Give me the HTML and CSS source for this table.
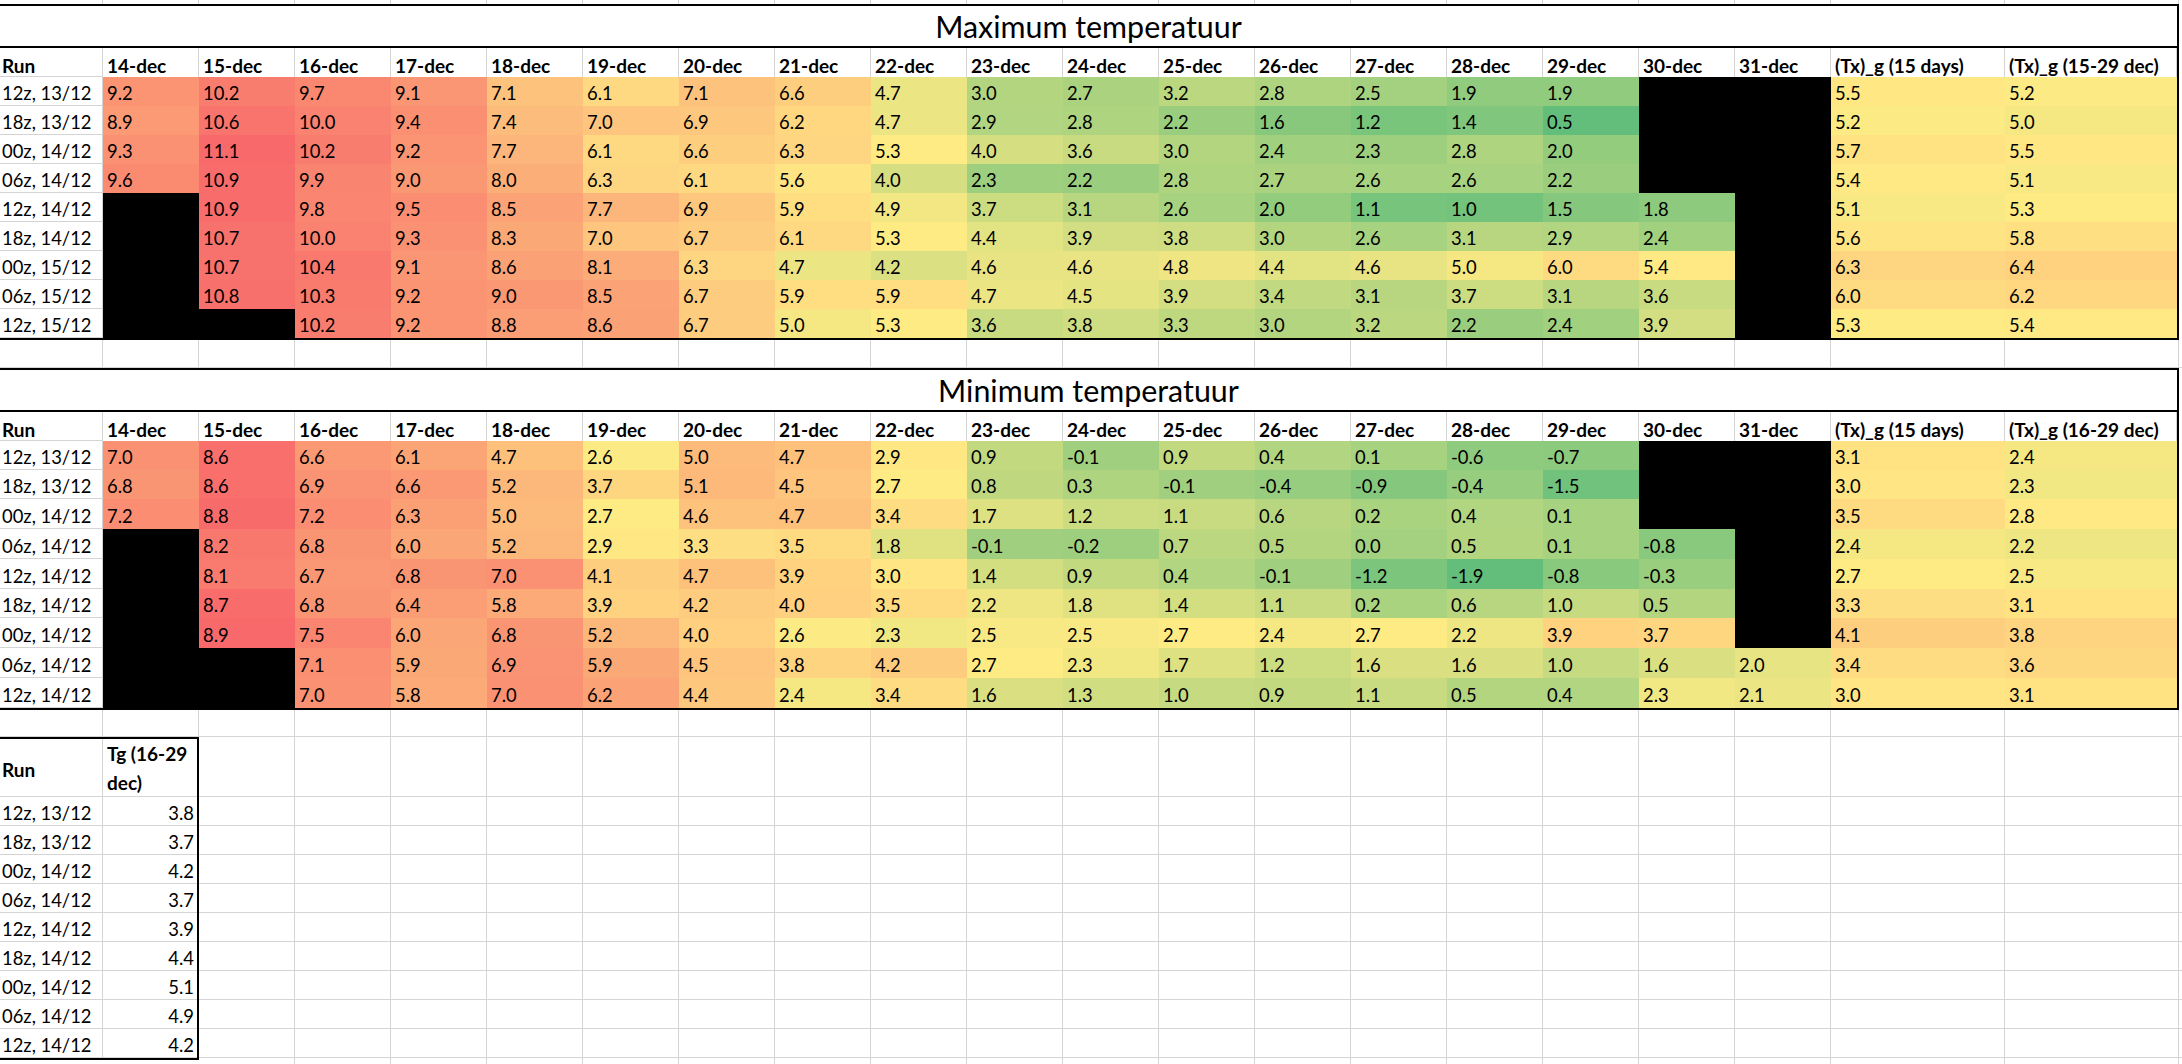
FILE: index.html
```html
<!DOCTYPE html>
<html lang="nl">
<head>
<meta charset="utf-8">
<title>Temperatuur</title>
<link rel="stylesheet" href="styles.css">
</head>
<body>
<div class="sheet">
  <div class="free strip"></div>

  <div class="block b1">
    <div class="title">Maximum temperatuur</div>
    <div class="h r">Run</div><div class="h">14-dec</div><div class="h">15-dec</div><div class="h">16-dec</div><div class="h">17-dec</div><div class="h">18-dec</div><div class="h">19-dec</div><div class="h">20-dec</div><div class="h">21-dec</div><div class="h">22-dec</div><div class="h">23-dec</div><div class="h">24-dec</div><div class="h">25-dec</div><div class="h">26-dec</div><div class="h">27-dec</div><div class="h">28-dec</div><div class="h">29-dec</div><div class="h">30-dec</div><div class="h">31-dec</div><div class="h">(Tx)_g (15 days)</div><div class="h">(Tx)_g (15-29 dec)</div>

    <div class="r">12z, 13/12</div><div class="v">9.2</div><div class="v">10.2</div><div class="v">9.7</div><div class="v">9.1</div><div class="v">7.1</div><div class="v">6.1</div><div class="v">7.1</div><div class="v">6.6</div><div class="v">4.7</div><div class="v">3.0</div><div class="v">2.7</div><div class="v">3.2</div><div class="v">2.8</div><div class="v">2.5</div><div class="v">1.9</div><div class="v">1.9</div><div class="k"></div><div class="k"></div><div class="v">5.5</div><div class="v">5.2</div>
    <div class="r">18z, 13/12</div><div class="v">8.9</div><div class="v">10.6</div><div class="v">10.0</div><div class="v">9.4</div><div class="v">7.4</div><div class="v">7.0</div><div class="v">6.9</div><div class="v">6.2</div><div class="v">4.7</div><div class="v">2.9</div><div class="v">2.8</div><div class="v">2.2</div><div class="v">1.6</div><div class="v">1.2</div><div class="v">1.4</div><div class="v">0.5</div><div class="k"></div><div class="k"></div><div class="v">5.2</div><div class="v">5.0</div>
    <div class="r">00z, 14/12</div><div class="v">9.3</div><div class="v">11.1</div><div class="v">10.2</div><div class="v">9.2</div><div class="v">7.7</div><div class="v">6.1</div><div class="v">6.6</div><div class="v">6.3</div><div class="v">5.3</div><div class="v">4.0</div><div class="v">3.6</div><div class="v">3.0</div><div class="v">2.4</div><div class="v">2.3</div><div class="v">2.8</div><div class="v">2.0</div><div class="k"></div><div class="k"></div><div class="v">5.7</div><div class="v">5.5</div>
    <div class="r">06z, 14/12</div><div class="v">9.6</div><div class="v">10.9</div><div class="v">9.9</div><div class="v">9.0</div><div class="v">8.0</div><div class="v">6.3</div><div class="v">6.1</div><div class="v">5.6</div><div class="v">4.0</div><div class="v">2.3</div><div class="v">2.2</div><div class="v">2.8</div><div class="v">2.7</div><div class="v">2.6</div><div class="v">2.6</div><div class="v">2.2</div><div class="k"></div><div class="k"></div><div class="v">5.4</div><div class="v">5.1</div>
    <div class="r">12z, 14/12</div><div class="k"></div><div class="v">10.9</div><div class="v">9.8</div><div class="v">9.5</div><div class="v">8.5</div><div class="v">7.7</div><div class="v">6.9</div><div class="v">5.9</div><div class="v">4.9</div><div class="v">3.7</div><div class="v">3.1</div><div class="v">2.6</div><div class="v">2.0</div><div class="v">1.1</div><div class="v">1.0</div><div class="v">1.5</div><div class="v">1.8</div><div class="k"></div><div class="v">5.1</div><div class="v">5.3</div>
    <div class="r">18z, 14/12</div><div class="k"></div><div class="v">10.7</div><div class="v">10.0</div><div class="v">9.3</div><div class="v">8.3</div><div class="v">7.0</div><div class="v">6.7</div><div class="v">6.1</div><div class="v">5.3</div><div class="v">4.4</div><div class="v">3.9</div><div class="v">3.8</div><div class="v">3.0</div><div class="v">2.6</div><div class="v">3.1</div><div class="v">2.9</div><div class="v">2.4</div><div class="k"></div><div class="v">5.6</div><div class="v">5.8</div>
    <div class="r">00z, 15/12</div><div class="k"></div><div class="v">10.7</div><div class="v">10.4</div><div class="v">9.1</div><div class="v">8.6</div><div class="v">8.1</div><div class="v">6.3</div><div class="v">4.7</div><div class="v">4.2</div><div class="v">4.6</div><div class="v">4.6</div><div class="v">4.8</div><div class="v">4.4</div><div class="v">4.6</div><div class="v">5.0</div><div class="v">6.0</div><div class="v">5.4</div><div class="k"></div><div class="v">6.3</div><div class="v">6.4</div>
    <div class="r">06z, 15/12</div><div class="k"></div><div class="v">10.8</div><div class="v">10.3</div><div class="v">9.2</div><div class="v">9.0</div><div class="v">8.5</div><div class="v">6.7</div><div class="v">5.9</div><div class="v">5.9</div><div class="v">4.7</div><div class="v">4.5</div><div class="v">3.9</div><div class="v">3.4</div><div class="v">3.1</div><div class="v">3.7</div><div class="v">3.1</div><div class="v">3.6</div><div class="k"></div><div class="v">6.0</div><div class="v">6.2</div>
    <div class="r">12z, 15/12</div><div class="k"></div><div class="k"></div><div class="v">10.2</div><div class="v">9.2</div><div class="v">8.8</div><div class="v">8.6</div><div class="v">6.7</div><div class="v">5.0</div><div class="v">5.3</div><div class="v">3.6</div><div class="v">3.8</div><div class="v">3.3</div><div class="v">3.0</div><div class="v">3.2</div><div class="v">2.2</div><div class="v">2.4</div><div class="v">3.9</div><div class="k"></div><div class="v">5.3</div><div class="v">5.4</div>
  </div>

  <div class="free gap1"></div>

  <div class="block b2">
    <div class="title">Minimum temperatuur</div>
    <div class="h r">Run</div><div class="h">14-dec</div><div class="h">15-dec</div><div class="h">16-dec</div><div class="h">17-dec</div><div class="h">18-dec</div><div class="h">19-dec</div><div class="h">20-dec</div><div class="h">21-dec</div><div class="h">22-dec</div><div class="h">23-dec</div><div class="h">24-dec</div><div class="h">25-dec</div><div class="h">26-dec</div><div class="h">27-dec</div><div class="h">28-dec</div><div class="h">29-dec</div><div class="h">30-dec</div><div class="h">31-dec</div><div class="h">(Tx)_g (15 days)</div><div class="h">(Tx)_g (16-29 dec)</div>

    <div class="r">12z, 13/12</div><div class="v">7.0</div><div class="v">8.6</div><div class="v">6.6</div><div class="v">6.1</div><div class="v">4.7</div><div class="v">2.6</div><div class="v">5.0</div><div class="v">4.7</div><div class="v">2.9</div><div class="v">0.9</div><div class="v">-0.1</div><div class="v">0.9</div><div class="v">0.4</div><div class="v">0.1</div><div class="v">-0.6</div><div class="v">-0.7</div><div class="k"></div><div class="k"></div><div class="v">3.1</div><div class="v">2.4</div>
    <div class="r">18z, 13/12</div><div class="v">6.8</div><div class="v">8.6</div><div class="v">6.9</div><div class="v">6.6</div><div class="v">5.2</div><div class="v">3.7</div><div class="v">5.1</div><div class="v">4.5</div><div class="v">2.7</div><div class="v">0.8</div><div class="v">0.3</div><div class="v">-0.1</div><div class="v">-0.4</div><div class="v">-0.9</div><div class="v">-0.4</div><div class="v">-1.5</div><div class="k"></div><div class="k"></div><div class="v">3.0</div><div class="v">2.3</div>
    <div class="r">00z, 14/12</div><div class="v">7.2</div><div class="v">8.8</div><div class="v">7.2</div><div class="v">6.3</div><div class="v">5.0</div><div class="v">2.7</div><div class="v">4.6</div><div class="v">4.7</div><div class="v">3.4</div><div class="v">1.7</div><div class="v">1.2</div><div class="v">1.1</div><div class="v">0.6</div><div class="v">0.2</div><div class="v">0.4</div><div class="v">0.1</div><div class="k"></div><div class="k"></div><div class="v">3.5</div><div class="v">2.8</div>
    <div class="r">06z, 14/12</div><div class="k"></div><div class="v">8.2</div><div class="v">6.8</div><div class="v">6.0</div><div class="v">5.2</div><div class="v">2.9</div><div class="v">3.3</div><div class="v">3.5</div><div class="v">1.8</div><div class="v">-0.1</div><div class="v">-0.2</div><div class="v">0.7</div><div class="v">0.5</div><div class="v">0.0</div><div class="v">0.5</div><div class="v">0.1</div><div class="v">-0.8</div><div class="k"></div><div class="v">2.4</div><div class="v">2.2</div>
    <div class="r">12z, 14/12</div><div class="k"></div><div class="v">8.1</div><div class="v">6.7</div><div class="v">6.8</div><div class="v">7.0</div><div class="v">4.1</div><div class="v">4.7</div><div class="v">3.9</div><div class="v">3.0</div><div class="v">1.4</div><div class="v">0.9</div><div class="v">0.4</div><div class="v">-0.1</div><div class="v">-1.2</div><div class="v">-1.9</div><div class="v">-0.8</div><div class="v">-0.3</div><div class="k"></div><div class="v">2.7</div><div class="v">2.5</div>
    <div class="r">18z, 14/12</div><div class="k"></div><div class="v">8.7</div><div class="v">6.8</div><div class="v">6.4</div><div class="v">5.8</div><div class="v">3.9</div><div class="v">4.2</div><div class="v">4.0</div><div class="v">3.5</div><div class="v">2.2</div><div class="v">1.8</div><div class="v">1.4</div><div class="v">1.1</div><div class="v">0.2</div><div class="v">0.6</div><div class="v">1.0</div><div class="v">0.5</div><div class="k"></div><div class="v">3.3</div><div class="v">3.1</div>
    <div class="r">00z, 14/12</div><div class="k"></div><div class="v">8.9</div><div class="v">7.5</div><div class="v">6.0</div><div class="v">6.8</div><div class="v">5.2</div><div class="v">4.0</div><div class="v">2.6</div><div class="v">2.3</div><div class="v">2.5</div><div class="v">2.5</div><div class="v">2.7</div><div class="v">2.4</div><div class="v">2.7</div><div class="v">2.2</div><div class="v">3.9</div><div class="v">3.7</div><div class="k"></div><div class="v">4.1</div><div class="v">3.8</div>
    <div class="r">06z, 14/12</div><div class="k"></div><div class="k"></div><div class="v">7.1</div><div class="v">5.9</div><div class="v">6.9</div><div class="v">5.9</div><div class="v">4.5</div><div class="v">3.8</div><div class="v">4.2</div><div class="v">2.7</div><div class="v">2.3</div><div class="v">1.7</div><div class="v">1.2</div><div class="v">1.6</div><div class="v">1.6</div><div class="v">1.0</div><div class="v">1.6</div><div class="v">2.0</div><div class="v">3.4</div><div class="v">3.6</div>
    <div class="r">12z, 14/12</div><div class="k"></div><div class="k"></div><div class="v">7.0</div><div class="v">5.8</div><div class="v">7.0</div><div class="v">6.2</div><div class="v">4.4</div><div class="v">2.4</div><div class="v">3.4</div><div class="v">1.6</div><div class="v">1.3</div><div class="v">1.0</div><div class="v">0.9</div><div class="v">1.1</div><div class="v">0.5</div><div class="v">0.4</div><div class="v">2.3</div><div class="v">2.1</div><div class="v">3.0</div><div class="v">3.1</div>
  </div>

  <div class="free gap2"></div>

  <div class="bottom">
    <div class="t3">
      <div class="r hc">Run</div><div class="tg">Tg (16-29 dec)</div>
      <div class="r">12z, 13/12</div><div class="n">3.8</div>
      <div class="r">18z, 13/12</div><div class="n">3.7</div>
      <div class="r">00z, 14/12</div><div class="n">4.2</div>
      <div class="r">06z, 14/12</div><div class="n">3.7</div>
      <div class="r">12z, 14/12</div><div class="n">3.9</div>
      <div class="r">18z, 14/12</div><div class="n">4.4</div>
      <div class="r">00z, 14/12</div><div class="n">5.1</div>
      <div class="r">06z, 14/12</div><div class="n">4.9</div>
      <div class="r">12z, 14/12</div><div class="n">4.2</div>
    </div>
    <div class="filler"></div>
  </div>
</div>
<script src="script.js"></script>
</body>
</html>
```

FILE: styles.css
```css
* { box-sizing: border-box; }
html, body { margin: 0; padding: 0; background: #fff; }
body {
  width: 2182px;
  height: 1064px;
  overflow: hidden;
  font-family: Lato, "Open Sans", "Liberation Sans", sans-serif;
  font-size: 18.4px;
  color: #000;
}
.sheet { display: flex; flex-direction: column; width: 2182px; height: 1064px; overflow: hidden; }

/* empty spreadsheet rows with gridlines */
.free {
  width: 2182px;
  flex: none;
  background:
    linear-gradient(#d4d4d4, #d4d4d4) 102px 0 / 1px 100% no-repeat,
    repeating-linear-gradient(to right, transparent 0 95px, #d4d4d4 95px 96px) 103px 0 / 1728px 100% no-repeat,
    linear-gradient(#d4d4d4, #d4d4d4) 2004px 0 / 1px 100% no-repeat,
    linear-gradient(#d4d4d4, #d4d4d4) 2178px 0 / 1px 100% no-repeat,
    linear-gradient(#d4d4d4, #d4d4d4) 0 100% / 100% 1px no-repeat;
}
.strip { height: 4px; background-size: 1px 100%, 1728px 100%, 1px 100%, 1px 100%, 0 0; }
.gap1 { height: 28px; }
.gap2 { height: 27px; }

/* framed tables */
.block {
  display: grid;
  flex: none;
  grid-template-columns: 103px repeat(18, 96px) 174px 172px;
  grid-template-rows: 42px;
  grid-auto-rows: 29px;
  width: max-content;
  border: 2px solid #000;
  border-left: 0;
}
.b2 { grid-template-rows: 42px 29px 29px 29px 30px 30px 30px 29px 30px 30px 30px; }

.title {
  grid-column: 1 / -1;
  display: flex;
  align-items: center;
  justify-content: center;
  border-bottom: 2px solid #000;
  font-size: 30.4px;
  line-height: 1.15;
  padding-top: 1px;
}

.h, .r, .v, .k, .n {
  display: flex;
  align-items: flex-end;
  padding: 0 0 2px 4px;
  line-height: 21px;
  white-space: nowrap;
}
.h {
  font-weight: 700;
  font-size: 19px;
  padding-bottom: 1px;
  box-shadow: inset -1px 0 0 #d4d4d4;
}
.r {
  padding-left: 2px;
  box-shadow: inset -1px -1px 0 #d4d4d4;
}
.h.r { box-shadow: inset -1px -1px 0 #d4d4d4; }
.k { background: #000; }

/* bottom table */
.bottom { display: flex; flex: 1; min-height: 0; }
.t3 {
  display: grid;
  grid-template-columns: 103px 94px;
  grid-template-rows: 58px;
  grid-auto-rows: 29px;
  width: 199px;
  align-self: flex-start;
  border: 2px solid #000;
  border-left: 0;
}
.t3 .hc { font-weight: 700; font-size: 19px; align-items: center; padding-bottom: 0; padding-top: 2px; }
.tg {
  font-weight: 700;
  font-size: 19px;
  line-height: 29px;
  padding-left: 4px;
  box-shadow: inset 0 -1px 0 #d4d4d4;
}
.n {
  justify-content: flex-end;
  padding-right: 3px;
  box-shadow: inset 0 -1px 0 #d4d4d4;
}
.filler {
  flex: 1;
  background:
    linear-gradient(#d4d4d4, #d4d4d4) 0 59px / 100% 1px no-repeat,
    repeating-linear-gradient(to bottom, transparent 0 28px, #d4d4d4 28px 29px) 0 60px / 100% 100% no-repeat,
    repeating-linear-gradient(to right, transparent 0 95px, #d4d4d4 95px 96px) 0 0 / 1632px 100% no-repeat,
    linear-gradient(#d4d4d4, #d4d4d4) 1805px 0 / 1px 100% no-repeat,
    linear-gradient(#d4d4d4, #d4d4d4) 1979px 0 / 1px 100% no-repeat;
}
```

FILE: script.js
```js
(function () {
  var G = [99, 190, 123], Y = [255, 235, 132], R = [248, 105, 107];
  document.querySelectorAll('.block').forEach(function (block) {
    var cells = Array.prototype.slice.call(block.querySelectorAll('.v'));
    var vals = cells.map(function (c) { return parseFloat(c.textContent); });
    var s = vals.slice().sort(function (a, b) { return a - b; });
    var n = s.length, min = s[0], max = s[n - 1];
    var rank = 0.5 * (n - 1), lo = Math.floor(rank);
    var mid = s[lo] + (s[Math.min(lo + 1, n - 1)] - s[lo]) * (rank - lo);
    cells.forEach(function (c, i) {
      var v = vals[i], a, b, t;
      if (v <= mid) { a = G; b = Y; t = mid === min ? 1 : (v - min) / (mid - min); }
      else { a = Y; b = R; t = max === mid ? 1 : (v - mid) / (max - mid); }
      var col = a.map(function (x, k) { return Math.round(x + (b[k] - x) * t); });
      c.style.backgroundColor = 'rgb(' + col.join(',') + ')';
    });
  });
})();
```
